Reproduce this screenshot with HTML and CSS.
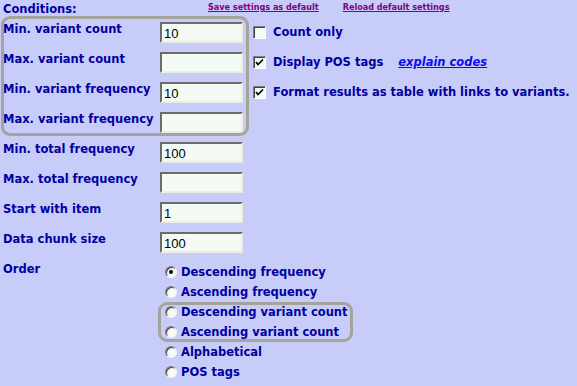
FILE: index.html
```html
<!doctype html>
<html>
    <head>
        <meta charset="utf-8">
        <title>Conditions</title>
        <link rel="stylesheet" href="styles.css">
    </head>
    <body>

        <div class="top-bar">
            <span class="section-title">Conditions:</span>
            <a href="#" class="tool-link">Save settings as default</a>
            <a href="#" class="tool-link tool-link-second">Reload default settings</a>
        </div>

        <form class="conditions">

            <div class="fields">

                <div class="group group-variants">
                    <div class="field-row">
                        <label for="min-vc">Min. variant count</label>
                        <input id="min-vc" type="text" class="field" value="10">
                    </div>
                    <div class="field-row">
                        <label for="max-vc">Max. variant count</label>
                        <input id="max-vc" type="text" class="field" value="">
                    </div>
                    <div class="field-row">
                        <label for="min-vf">Min. variant frequency</label>
                        <input id="min-vf" type="text" class="field" value="10">
                    </div>
                    <div class="field-row">
                        <label for="max-vf">Max. variant frequency</label>
                        <input id="max-vf" type="text" class="field" value="">
                    </div>
                </div>

                <div class="field-row">
                    <label for="min-tf">Min. total frequency</label>
                    <input id="min-tf" type="text" class="field" value="100">
                </div>
                <div class="field-row">
                    <label for="max-tf">Max. total frequency</label>
                    <input id="max-tf" type="text" class="field" value="">
                </div>
                <div class="field-row">
                    <label for="start">Start with item</label>
                    <input id="start" type="text" class="field" value="1">
                </div>
                <div class="field-row">
                    <label for="chunk">Data chunk size</label>
                    <input id="chunk" type="text" class="field" value="100">
                </div>

                <div class="order-row">
                    <span class="order-label">Order</span>
                    <div class="radio-list">
                        <div class="radio-row"><span class="radio on"></span>Descending frequency</div>
                        <div class="radio-row"><span class="radio"></span>Ascending frequency</div>
                        <div class="group group-order">
                            <div class="radio-row"><span class="radio"></span>Descending variant count</div>
                            <div class="radio-row"><span class="radio"></span>Ascending variant count</div>
                        </div>
                        <div class="radio-row"><span class="radio"></span>Alphabetical</div>
                        <div class="radio-row"><span class="radio"></span>POS tags</div>
                    </div>
                </div>

            </div>

            <div class="options">
                <div class="option-row">
                    <span class="check"></span>
                    Count only
                </div>
                <div class="option-row">
                    <span class="check"><svg viewBox="0 0 9 9" width="9" height="9"><path d="M1 4 L3 6.5 L8 1.5" fill="none" stroke="#000" stroke-width="1.6"/></svg></span>
                    Display POS tags
                    <a href="#" class="explain-link">explain codes</a>
                </div>
                <div class="option-row">
                    <span class="check"><svg viewBox="0 0 9 9" width="9" height="9"><path d="M1 4 L3 6.5 L8 1.5" fill="none" stroke="#000" stroke-width="1.6"/></svg></span>
                    Format results as table with links to variants.
                </div>
            </div>

        </form>

    </body>
</html>
```

FILE: styles.css
```css
body {
    margin: 0;
    background: #c8ccf8;
    color: #0000a0;
    font-family: "DejaVu Sans", Verdana, sans-serif;
    font-weight: bold;
    font-size: 11.5px;
    line-height: 13px;
}

.top-bar {
    display: flex;
    align-items: flex-start;
    height: 19px;
    padding: 3px 0 0 3px;
}

.section-title {
    width: 205px;
}

.tool-link {
    color: #800080;
    font-size: 8.1px;
    line-height: 9px;
}

.tool-link-second {
    margin-left: 24px;
}

.conditions {
    display: flex;
    margin: 0;
}

.fields {
    width: 250px;
}

.group {
    position: relative;
}

.group::before {
    content: "";
    position: absolute;
    border: 3px solid #a4a49c;
    border-radius: 9px;
    pointer-events: none;
}

.group-variants::before {
    top: -6px;
    left: 1px;
    width: 242px;
    height: 114px;
}

.group-order::before {
    top: 0;
    left: -2px;
    width: 189px;
    height: 34px;
}

.field-row {
    display: grid;
    grid-template-columns: 157px 83px;
    height: 30px;
    padding-left: 3px;
}

.field-row label {
    padding-top: 1px;
}

.field {
    box-sizing: border-box;
    width: 83px;
    height: 21px;
    margin: 0;
    padding: 1px 2px 0;
    border: 2px solid;
    border-color: #6c6c6c #ecece4 #ecece4 #6c6c6c;
    background: #f4fbf4;
    color: #000;
    font-family: "Liberation Sans", Arial, sans-serif;
    font-weight: normal;
    font-size: 13px;
}

.order-row {
    display: grid;
    grid-template-columns: 157px auto;
    padding-left: 3px;
}

.order-label {
    padding-top: 1px;
}

.radio-row {
    display: flex;
    align-items: center;
    height: 20px;
    white-space: nowrap;
}

.radio {
    box-sizing: border-box;
    position: relative;
    width: 12px;
    height: 12px;
    margin: 0 4px 0 5px;
    border-radius: 50%;
    border: 1px solid;
    border-color: #808080 #f8f8f8 #f8f8f8 #808080;
    background: radial-gradient(circle at 60% 60%, #ffffff 0, #eef2ee 60%, #c8ccc8 100%);
    box-shadow: inset 1px 1px 0 #404040;
}

.radio.on::after {
    content: "";
    position: absolute;
    top: 3px;
    left: 3px;
    width: 4px;
    height: 4px;
    border-radius: 50%;
    background: #000;
}

.options {
    padding-left: 3px;
}

.option-row {
    display: flex;
    align-items: center;
    height: 21px;
    margin-bottom: 9px;
    white-space: nowrap;
}

.check {
    box-sizing: border-box;
    display: flex;
    align-items: center;
    justify-content: center;
    width: 13px;
    height: 13px;
    margin-right: 7px;
    border: 1px solid;
    border-color: #808080 #ffffff #ffffff #808080;
    box-shadow: inset 1px 1px 0 #404040;
    background: #f4fbf4;
}

.explain-link {
    margin-left: 15px;
    color: #0c0cf0;
    font-style: italic;
}
```
